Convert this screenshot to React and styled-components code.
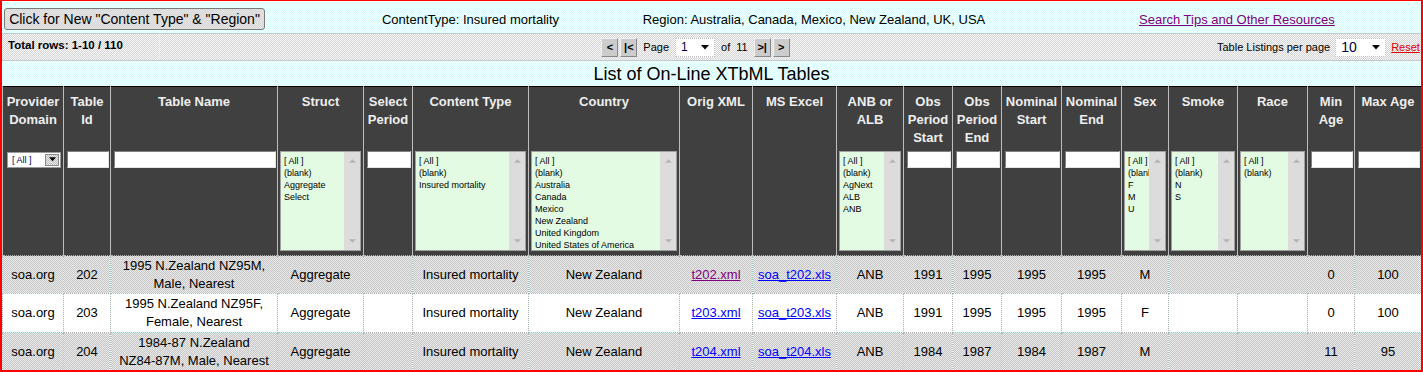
import React from 'react';
import styled, { createGlobalStyle } from 'styled-components';

const checker = (a, b) => `repeating-conic-gradient(${a} 0% 25%, ${b} 0% 50%) 0 0 / 2px 2px`;

const GlobalStyle = createGlobalStyle`
  html, body {
    margin: 0;
    padding: 0;
    background: #fff;
  }
  body {
    font-family: "Liberation Sans", Arial, sans-serif;
    color: #000;
  }
`;

const columns = [
  { key: 'domain', title: 'Provider Domain', width: 61, filter: 'select' },
  { key: 'id', title: 'Table Id', width: 47, filter: 'input' },
  { key: 'name', title: 'Table Name', width: 167, filter: 'input' },
  { key: 'struct', title: 'Struct', width: 86, filter: ['[ All ]', '(blank)', 'Aggregate', 'Select'] },
  { key: 'period', title: 'Select Period', width: 49, filter: 'input' },
  { key: 'content', title: 'Content Type', width: 116, filter: ['[ All ]', '(blank)', 'Insured mortality'] },
  {
    key: 'country',
    title: 'Country',
    width: 151,
    filter: ['[ All ]', '(blank)', 'Australia', 'Canada', 'Mexico', 'New Zealand', 'United Kingdom', 'United States of America'],
  },
  { key: 'xml', title: 'Orig XML', width: 73 },
  { key: 'xls', title: 'MS Excel', width: 84 },
  { key: 'anb', title: 'ANB or ALB', width: 67, filter: ['[ All ]', '(blank)', 'AgNext', 'ALB', 'ANB'] },
  { key: 'obsStart', title: 'Obs Period Start', width: 49, filter: 'input' },
  { key: 'obsEnd', title: 'Obs Period End', width: 49, filter: 'input' },
  { key: 'nomStart', title: 'Nominal Start', width: 60, filter: 'input' },
  { key: 'nomEnd', title: 'Nominal End', width: 60, filter: 'input' },
  { key: 'sex', title: 'Sex', width: 47, filter: ['[ All ]', '(blank)', 'F', 'M', 'U'] },
  { key: 'smoke', title: 'Smoke', width: 69, filter: ['[ All ]', '(blank)', 'N', 'S'] },
  { key: 'race', title: 'Race', width: 70, filter: ['[ All ]', '(blank)'] },
  { key: 'minAge', title: 'Min Age', width: 47, filter: 'input' },
  { key: 'maxAge', title: 'Max Age', width: 67, filter: 'input' },
];

// name is split in words that must stay together, so the wrap matches the original listing
const rows = [
  {
    domain: 'soa.org', id: '202', name: ['1995 N.Zealand NZ95M,', 'Male, Nearest'], struct: 'Aggregate', period: '',
    content: 'Insured mortality', country: 'New Zealand', xml: 't202.xml', xmlVisited: true, xls: 'soa_t202.xls',
    anb: 'ANB', obsStart: '1991', obsEnd: '1995', nomStart: '1995', nomEnd: '1995', sex: 'M', smoke: '', race: '',
    minAge: '0', maxAge: '100', height: 38,
  },
  {
    domain: 'soa.org', id: '203', name: ['1995 N.Zealand NZ95F,', 'Female, Nearest'], struct: 'Aggregate', period: '',
    content: 'Insured mortality', country: 'New Zealand', xml: 't203.xml', xls: 'soa_t203.xls',
    anb: 'ANB', obsStart: '1991', obsEnd: '1995', nomStart: '1995', nomEnd: '1995', sex: 'F', smoke: '', race: '',
    minAge: '0', maxAge: '100', height: 39,
  },
  {
    domain: 'soa.org', id: '204', name: ['1984-87 N.Zealand', 'NZ84-87M, Male, Nearest'], struct: 'Aggregate', period: '',
    content: 'Insured mortality', country: 'New Zealand', xml: 't204.xml', xls: 'soa_t204.xls',
    anb: 'ANB', obsStart: '1984', obsEnd: '1987', nomStart: '1984', nomEnd: '1987', sex: 'M', smoke: '', race: '',
    minAge: '11', maxAge: '95', height: 38,
  },
];

const DownArrow = ({ size = 7 }) => (
  <svg width={size} height={Math.ceil(size / 2) + 1} viewBox="0 0 8 5">
    <path d="M0 0 H8 L4 4.5 Z" fill="#000" />
  </svg>
);

const ScrollArrow = ({ up }) => (
  <svg width="7" height="4" viewBox="0 0 8 4">
    <path d={up ? 'M0 4 H8 L4 0 Z' : 'M0 0 H8 L4 4 Z'} fill="#b4b4b4" />
  </svg>
);

const ListBox = ({ options }) => (
  <Styled.ListBox>
    <Styled.Options>
      {options.map((o) => (
        <div key={o}>{o}</div>
      ))}
    </Styled.Options>
    <Styled.ScrollTrack>
      <ScrollArrow up />
      <ScrollArrow />
    </Styled.ScrollTrack>
  </Styled.ListBox>
);

const Filter = ({ filter }) => {
  if (filter === 'input') return <Styled.TextBox type="text" />;
  if (filter === 'select')
    return (
      <Styled.DropDown>
        <span>[ All ]</span>
        <Styled.DropButton>
          <DownArrow size={7} />
        </Styled.DropButton>
      </Styled.DropDown>
    );
  if (Array.isArray(filter)) return <ListBox options={filter} />;
  return null;
};

const Cell = ({ col, row }) => {
  const value = row[col.key];
  if (col.key === 'xml') return <Styled.Link $visited={row.xmlVisited}>{value}</Styled.Link>;
  if (col.key === 'xls') return <Styled.Link>{value}</Styled.Link>;
  if (Array.isArray(value))
    return value.map((part, i) => (
      <React.Fragment key={part}>
        {i > 0 && ' '}
        <Styled.NoWrap>{part}</Styled.NoWrap>
      </React.Fragment>
    ));
  return value;
};

const App = () => {
  return (
    <>
      <GlobalStyle />
      <Styled.Page>
        <Styled.TopBar>
          <Styled.TopCell $w={300} $pl={2}>
            <Styled.NewButton>Click for New "Content Type" &amp; "Region"</Styled.NewButton>
          </Styled.TopCell>
          <Styled.TopCell $w={337} $align="center">ContentType: Insured mortality</Styled.TopCell>
          <Styled.TopCell $w={350} $align="center">Region: Australia, Canada, Mexico, New Zealand, UK, USA</Styled.TopCell>
          <Styled.TopCell $w={430} $pl={150}>
            <Styled.Link $visited>Search Tips and Other Resources</Styled.Link>
          </Styled.TopCell>
        </Styled.TopBar>

        <Styled.PagerBar>
          <Styled.TotalRows>Total rows: 1-10 / 110</Styled.TotalRows>
          <Styled.Pager>
            <Styled.ButtonGroup>
              <Styled.PageButton>&lt;</Styled.PageButton>
              <Styled.PageButton>|&lt;</Styled.PageButton>
            </Styled.ButtonGroup>
            <span>Page</span>
            <Styled.PageSelect $w={40}>
              <span>1</span>
              <DownArrow size={8} />
            </Styled.PageSelect>
            <span>of</span>
            <span>11</span>
            <Styled.ButtonGroup>
              <Styled.PageButton>&gt;|</Styled.PageButton>
              <Styled.PageButton>&gt;</Styled.PageButton>
            </Styled.ButtonGroup>
          </Styled.Pager>
          <Styled.PerPage>
            <span>Table Listings per page</span>
            <Styled.PageSelect $w={51} $big>
              <span>10</span>
              <DownArrow size={8} />
            </Styled.PageSelect>
            <Styled.Reset>Reset</Styled.Reset>
          </Styled.PerPage>
        </Styled.PagerBar>

        <Styled.Title>List of On-Line XTbML Tables</Styled.Title>

        <Styled.Table>
          <colgroup>
            {columns.map((c) => (
              <col key={c.key} style={{ width: c.width }} />
            ))}
          </colgroup>
          <thead>
            <tr>
              {columns.map((c) => (
                <Styled.HeadCell key={c.key}>{c.title}</Styled.HeadCell>
              ))}
            </tr>
            <tr>
              {columns.map((c) => (
                <Styled.FilterCell key={c.key} $list={Array.isArray(c.filter)}>
                  <Filter filter={c.filter} />
                </Styled.FilterCell>
              ))}
            </tr>
          </thead>
          <tbody>
            {rows.map((r, i) => (
              <Styled.Row key={r.id} $odd={i % 2 === 1} $h={r.height}>
                {columns.map((c) => (
                  <Styled.DataCell key={c.key}>
                    <Cell col={c} row={r} />
                  </Styled.DataCell>
                ))}
              </Styled.Row>
            ))}
          </tbody>
        </Styled.Table>
      </Styled.Page>
    </>
  );
};

const Styled = {
  Page: styled.div`
    box-sizing: border-box;
    width: 1423px;
    height: 372px;
    border: 2px solid #f00;
    border-top-width: 1px;
    overflow: hidden;
    background: ${checker('#d6ffff', '#f2ffff')};
  `,
  TopBar: styled.div`
    display: flex;
    align-items: center;
    height: 32px;
    padding-top: 3px;
    box-sizing: border-box;
    border-top: 1px solid #fff;
    font-size: 13px;
    white-space: nowrap;
  `,
  TopCell: styled.div`
    flex: none;
    width: ${({ $w }) => $w}px;
    padding-left: ${({ $pl }) => $pl || 0}px;
    box-sizing: border-box;
    text-align: ${({ $align }) => $align || 'left'};
  `,
  NewButton: styled.button`
    display: block;
    width: 261px;
    height: 22px;
    margin-top: -1px;
    padding: 0;
    font-family: "Liberation Sans", Arial, sans-serif;
    font-size: 14px;
    color: #000;
    background: ${checker('#d4d4d4', '#e8e8e8')};
    border: 1px solid #7a7a7a;
    border-radius: 3px;
  `,
  Link: styled.a`
    color: ${({ $visited }) => ($visited ? '#800080' : '#0000ff')};
    text-decoration: underline;
    cursor: pointer;
  `,
  NoWrap: styled.span`
    white-space: nowrap;
  `,
  PagerBar: styled.div`
    display: flex;
    height: 28px;
    box-sizing: border-box;
    border-top: 1px solid #c8c8c8;
    border-bottom: 1px solid #c8c8c8;
    background: ${checker('#d4d4d4', '#f8f8f8')};
    font-size: 11px;
  `,
  TotalRows: styled.div`
    width: 158px;
    flex: none;
    box-sizing: border-box;
    padding: 5px 0 0 6px;
    font-size: 11.5px;
    font-weight: bold;
    border-right: 1px solid #eeeeee;
  `,
  Pager: styled.div`
    flex: 1;
    display: flex;
    justify-content: center;
    align-items: center;
    gap: 6px;
    padding: 2px 0 0 14px;
    align-self: flex-start;
    height: 22px;
  `,
  ButtonGroup: styled.div`
    display: flex;
    gap: 2px;
  `,
  PageButton: styled.div`
    width: 17px;
    height: 19px;
    box-sizing: border-box;
    display: flex;
    align-items: center;
    justify-content: center;
    background: #cccccc;
    border: 1px solid;
    border-color: #f0f0f0 #888 #888 #f0f0f0;
    font-weight: bold;
    font-size: 11px;
  `,
  PageSelect: styled.div`
    width: ${({ $w }) => $w}px;
    height: 19px;
    box-sizing: border-box;
    display: flex;
    align-items: center;
    justify-content: space-between;
    padding: 0 5px 0 5px;
    background: #fff;
    border: 1px dotted #c0c0c0;
    font-size: ${({ $big }) => ($big ? '14px' : '12px')};
    color: #000040;
  `,
  PerPage: styled.div`
    flex: none;
    width: 204px;
    display: flex;
    align-items: center;
    gap: 5px;
    padding-top: 2px;
    align-self: flex-start;
    height: 22px;
    white-space: nowrap;
  `,
  Reset: styled.a`
    color: #e00000;
    text-decoration: underline;
  `,
  Title: styled.div`
    height: 25px;
    line-height: 26px;
    text-align: center;
    font-size: 18px;
  `,
  Table: styled.table`
    width: 1419px;
    table-layout: fixed;
    border-collapse: collapse;
    border-top: 1px solid #000;
  `,
  HeadCell: styled.th`
    height: 62px;
    box-sizing: border-box;
    padding: 6px 1px 0;
    vertical-align: top;
    background: ${checker('#2e2e2e', '#525252')};
    color: #eeeeee;
    font-size: 13px;
    line-height: 18px;
    font-weight: bold;
    text-align: center;
    border-left: 1px solid #bdbdbd;
    border-right: 1px solid #bdbdbd;
    overflow: hidden;
  `,
  FilterCell: styled.td`
    height: 107px;
    box-sizing: border-box;
    padding: ${({ $list }) => ($list ? '2px 2px 0 2px' : '2px 1px 0 3px')};
    vertical-align: top;
    background: ${checker('#2e2e2e', '#525252')};
    border-left: 1px solid #bdbdbd;
    border-right: 1px solid #bdbdbd;
  `,
  TextBox: styled.input`
    display: block;
    width: 100%;
    height: 17px;
    box-sizing: border-box;
    margin: 0;
    padding: 0 2px;
    border: 1px solid;
    border-color: #808080 #e4e4e4 #e4e4e4 #808080;
    background: #fff;
    font-size: 11px;
  `,
  DropDown: styled.div`
    display: flex;
    align-items: center;
    justify-content: space-between;
    width: 54px;
    height: 16px;
    box-sizing: border-box;
    margin: 1px 0 0 1px;
    padding: 0 1px 0 4px;
    background: #fff;
    border: 1px solid #9a9a9a;
    font-size: 9px;
    color: #000060;
  `,
  DropButton: styled.div`
    width: 14px;
    height: 12px;
    box-sizing: border-box;
    display: flex;
    align-items: center;
    justify-content: center;
    background: ${checker('#bcbcbc', '#ececec')};
    border: 1px solid #8a8a8a;
  `,
  ListBox: styled.div`
    display: flex;
    height: 100px;
    box-sizing: border-box;
    border: 1px solid #a0a0a0;
    background: #e3fbe3;
    overflow: hidden;
  `,
  Options: styled.div`
    flex: 1;
    min-width: 0;
    padding: 3px 0 0 3px;
    font-size: 9px;
    line-height: 12px;
    white-space: nowrap;
    overflow: hidden;
    color: #000;
  `,
  ScrollTrack: styled.div`
    flex: none;
    width: 16px;
    display: flex;
    flex-direction: column;
    align-items: center;
    justify-content: space-between;
    padding: 7px 0 7px;
    box-sizing: border-box;
    background: #dcdcdc;
  `,
  Row: styled.tr`
    height: ${({ $h }) => $h}px;
    background: ${({ $odd }) => ($odd ? '#ffffff' : checker('#c6c6c6', '#eaeaea'))};
  `,
  DataCell: styled.td`
    padding: 0 3px;
    border: 1px dotted #b4b4b4;
    text-align: center;
    vertical-align: middle;
    font-size: 13px;
    line-height: 18px;
    overflow: hidden;
  `,
};

export default App;
